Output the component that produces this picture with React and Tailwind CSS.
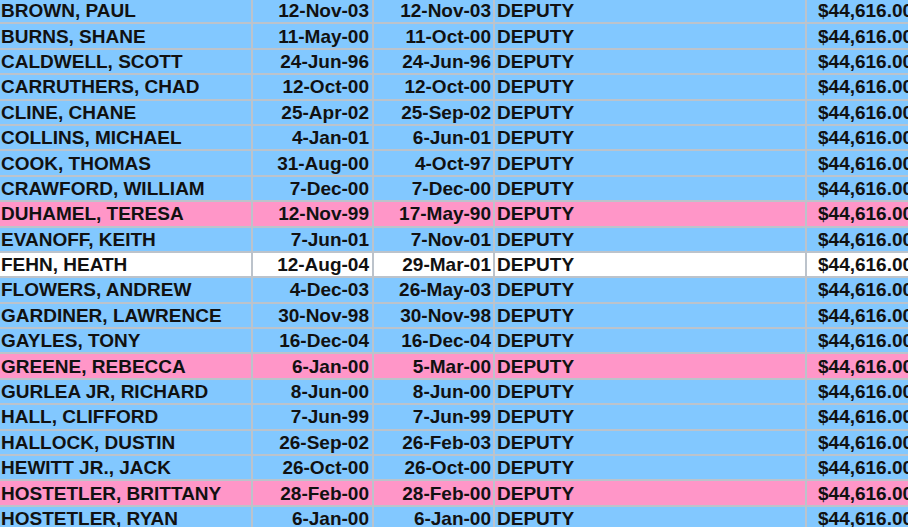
const rows = [
  ['BROWN, PAUL', '12-Nov-03', '12-Nov-03', 'blue'],
  ['BURNS, SHANE', '11-May-00', '11-Oct-00', 'blue'],
  ['CALDWELL, SCOTT', '24-Jun-96', '24-Jun-96', 'blue'],
  ['CARRUTHERS, CHAD', '12-Oct-00', '12-Oct-00', 'blue'],
  ['CLINE, CHANE', '25-Apr-02', '25-Sep-02', 'blue'],
  ['COLLINS, MICHAEL', '4-Jan-01', '6-Jun-01', 'blue'],
  ['COOK, THOMAS', '31-Aug-00', '4-Oct-97', 'blue'],
  ['CRAWFORD, WILLIAM', '7-Dec-00', '7-Dec-00', 'blue'],
  ['DUHAMEL, TERESA', '12-Nov-99', '17-May-90', 'pink'],
  ['EVANOFF, KEITH', '7-Jun-01', '7-Nov-01', 'blue'],
  ['FEHN, HEATH', '12-Aug-04', '29-Mar-01', 'white'],
  ['FLOWERS, ANDREW', '4-Dec-03', '26-May-03', 'blue'],
  ['GARDINER, LAWRENCE', '30-Nov-98', '30-Nov-98', 'blue'],
  ['GAYLES, TONY', '16-Dec-04', '16-Dec-04', 'blue'],
  ['GREENE, REBECCA', '6-Jan-00', '5-Mar-00', 'pink'],
  ['GURLEA JR, RICHARD', '8-Jun-00', '8-Jun-00', 'blue'],
  ['HALL, CLIFFORD', '7-Jun-99', '7-Jun-99', 'blue'],
  ['HALLOCK, DUSTIN', '26-Sep-02', '26-Feb-03', 'blue'],
  ['HEWITT JR., JACK', '26-Oct-00', '26-Oct-00', 'blue'],
  ['HOSTETLER, BRITTANY', '28-Feb-00', '28-Feb-00', 'pink'],
  ['HOSTETLER, RYAN', '6-Jan-00', '6-Jan-00', 'blue'],
];

const bg = {
  blue: 'bg-[#82c8ff]',
  pink: 'bg-[#ff96c8]',
  white: 'bg-white',
};

const cell = 'h-full flex items-center border-r-2 border-[#bcc3cb] shrink-0';

const Row = ({ name, hired, promoted, color }) => (
  <div className={`flex h-[25.4px] border-b-2 border-[#bcc3cb] ${bg[color]}`}>
    <div className={`${cell} w-[253px] pl-px`}>{name}</div>
    <div className={`${cell} w-[121px] justify-end pr-[3px]`}>{hired}</div>
    <div className={`${cell} w-[121px] justify-end pr-[2px]`}>{promoted}</div>
    <div className={`${cell} w-[312px] pl-[2px]`}>DEPUTY</div>
    <div className="h-full flex items-center pl-[11px] flex-1">$44,616.00</div>
  </div>
);

export default function App() {
  return (
    <div className="w-[908px] h-[527px] overflow-hidden bg-[#82c8ff]">
      <div
        className="-mt-px w-[960px] text-[19px] font-bold text-[#111] whitespace-nowrap leading-none"
        style={{ fontFamily: '"Liberation Sans", Arial, sans-serif' }}
      >
        {rows.map(([name, hired, promoted, color]) => (
          <Row key={name} name={name} hired={hired} promoted={promoted} color={color} />
        ))}
      </div>
    </div>
  );
}
